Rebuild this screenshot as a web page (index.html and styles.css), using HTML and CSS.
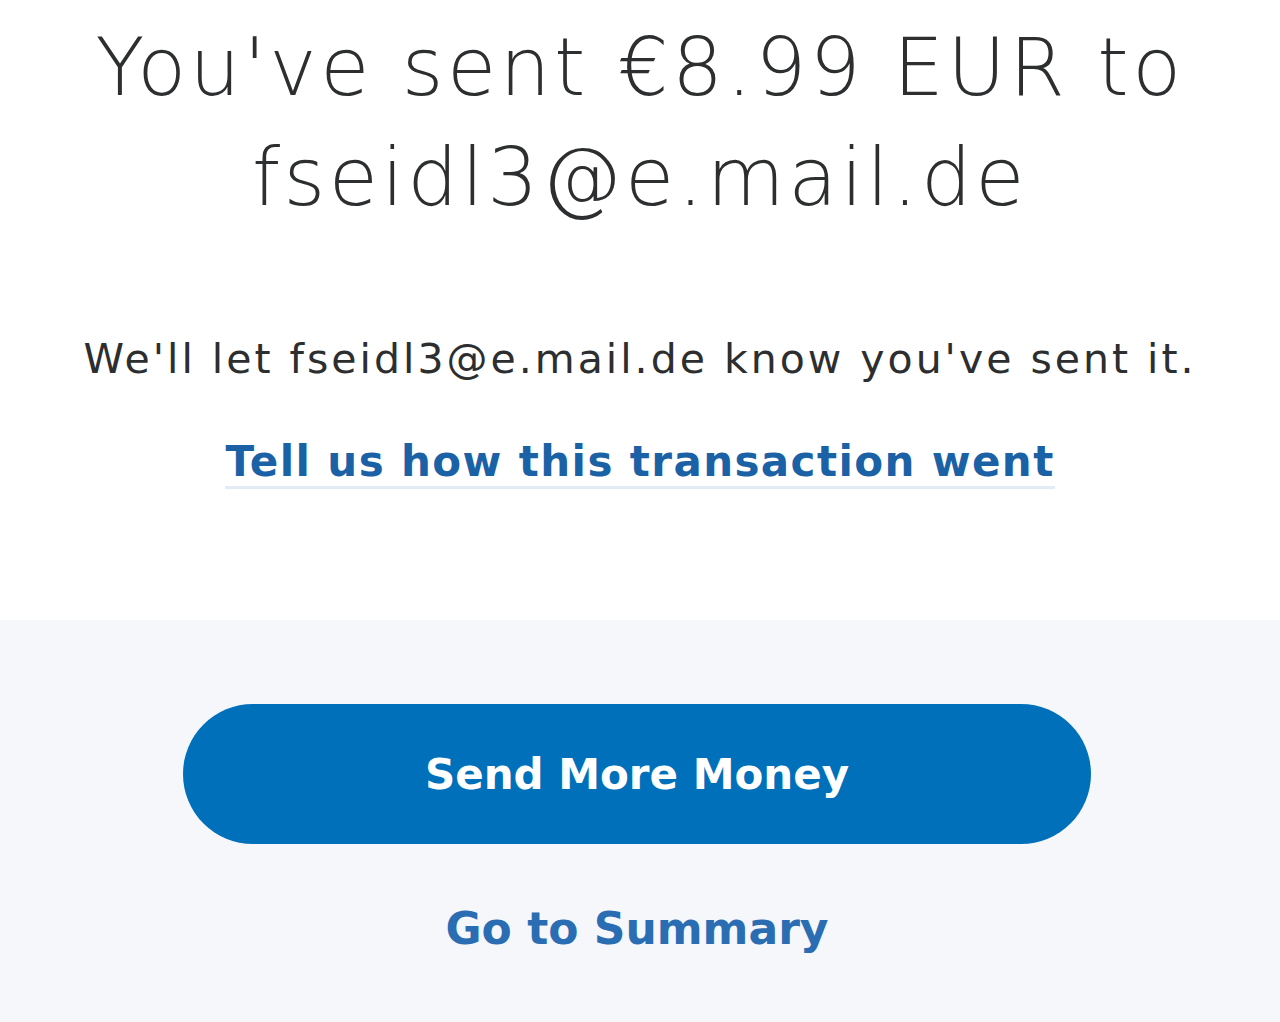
FILE: index.html
```html
<!DOCTYPE html>
<html lang="en">
<head>
  <meta charset="UTF-8">
  <title>Money sent</title>
  <link rel="stylesheet" href="styles.css">
</head>
<body>
  <main class="confirm">
    <section class="result">
      <h1 class="result-title">You've sent €8.99 EUR to fseidl3@e.mail.de</h1>
      <p class="result-note">We'll let fseidl3@e.mail.de know you've sent it.</p>
      <div class="feedback"><a href="#" class="feedback-link">Tell us how this transaction went</a></div>
    </section>
    <section class="actions">
      <button class="btn-primary">Send More Money</button>
      <a href="#" class="summary-link">Go to Summary</a>
    </section>
  </main>
</body>
</html>
```

FILE: styles.css
```css
body {margin:0; font-family:"DejaVu Sans", Verdana, sans-serif; color:#2c2e2f; background:#f5f7fa;}
.confirm {min-height:100vh; display:flex; flex-direction:column;}
.result {background:#fff; text-align:center; padding:13px 10px 0; height:620px; box-sizing:border-box;}
.result-title {margin:0; font-size:80px; font-weight:200; line-height:110px; letter-spacing:3.5px;}
.result-note {margin:98px 0 0; font-size:41px; line-height:56px; letter-spacing:3px;}
.feedback {margin-top:47px; line-height:56px;}
.feedback-link {font-size:42px; font-weight:700; letter-spacing:1.4px; color:#1b61a6; text-decoration:none; border-bottom:3px solid #e3ecf5;}
.actions {flex:1; display:flex; flex-direction:column; align-items:center; padding:84px 6px 0 0;}
.btn-primary {width:908px; height:140px; border:none; border-radius:70px; background:#0070ba; color:#fff; font-family:inherit; font-size:42px; font-weight:700; cursor:pointer;}
.summary-link {margin-top:57px; font-size:44px; line-height:56px; font-weight:700; color:#2a6db3; text-decoration:none;}
```
